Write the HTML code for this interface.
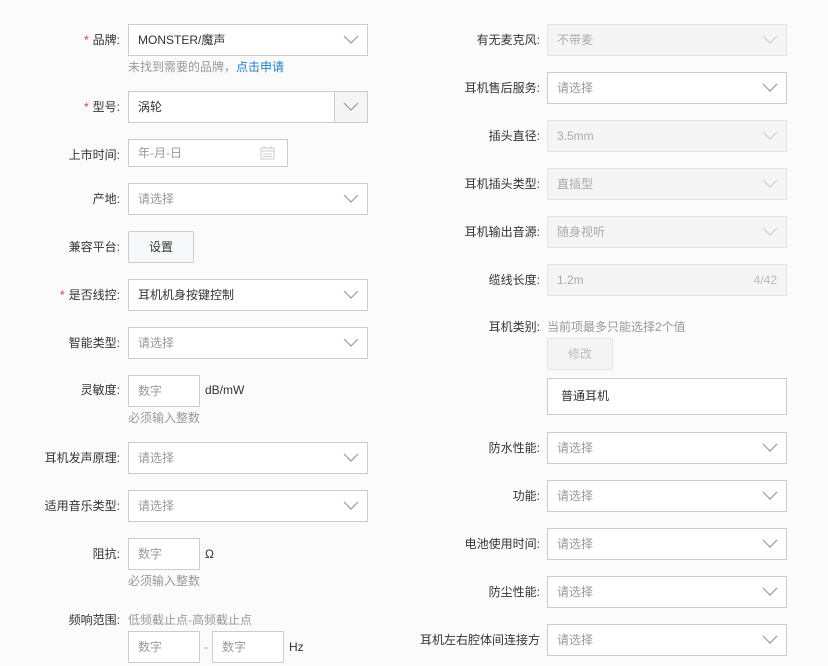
<!DOCTYPE html>
<html><head><meta charset="utf-8"><style>
*{box-sizing:border-box;margin:0;padding:0}
body{width:828px;height:666px;background:#fbfbfc;font-family:"Liberation Sans","Noto Sans CJK SC",sans-serif;font-size:12px;color:#333;position:relative;overflow:hidden}
.l{position:absolute;text-align:right;white-space:nowrap;color:#333;line-height:14px}
.r{color:#e4393c;margin-right:4px}
.b{position:absolute;border:1px solid #ccc;background:#fff;height:32px;line-height:30px;padding-left:9px;white-space:nowrap}
.ph{color:#999}
.dis{background:#f5f5f5;border-color:#e3e3e3;color:#aaa}
.ar{position:absolute;right:8px;top:8px;width:16px;height:12px}
.h{position:absolute;color:#999;white-space:nowrap;line-height:14px}
.btn{position:absolute;border:1px solid #ccc;background:#f7f8fa;border-radius:2px;text-align:center;line-height:30px}
</style></head><body>
<svg width="0" height="0" style="position:absolute"><defs><symbol id="a" viewBox="0 0 16 12"><path d="M1 3 L8 10 L15 3" fill="none" stroke="#999" stroke-width="1.2"/></symbol><symbol id="ad" viewBox="0 0 16 12"><path d="M1 3 L8 10 L15 3" fill="none" stroke="#ccc" stroke-width="1.2"/></symbol></defs></svg>

<!-- left column -->
<div class="l" style="right:708px;top:33px"><span class="r">*</span>品牌:</div>
<div class="b" style="left:128px;top:24px;width:240px">MONSTER/魔声<svg class="ar"><use href="#a"/></svg></div>
<div class="h" style="left:128px;top:60px">未找到需要的品牌，<span style="color:#1e7fcf">点击申请</span></div>

<div class="l" style="right:708px;top:100px"><span class="r">*</span>型号:</div>
<div class="b" style="left:128px;top:91px;width:240px">涡轮<div style="position:absolute;right:0;top:0;width:33px;height:30px;background:#f5f5f5;border-left:1px solid #ccc"><svg class="ar" style="right:8px"><use href="#a"/></svg></div></div>

<div class="l" style="right:708px;top:148px">上市时间:</div>
<div class="b ph" style="left:128px;top:139px;width:160px;height:28px;line-height:26px">年-月-日<svg style="position:absolute;right:12px;top:6px" width="15" height="14" viewBox="0 0 15 14"><rect x="1" y="2" width="13" height="11" fill="none" stroke="#ccc"/><path d="M1 5h13M4 0v3M11 0v3M3 8h9M3 10.5h9" stroke="#ccc"/></svg></div>

<div class="l" style="right:708px;top:192px">产地:</div>
<div class="b ph" style="left:128px;top:183px;width:240px">请选择<svg class="ar"><use href="#a"/></svg></div>

<div class="l" style="right:708px;top:240px">兼容平台:</div>
<div class="btn" style="left:128px;top:231px;width:66px;height:32px">设置</div>

<div class="l" style="right:708px;top:288px"><span class="r">*</span>是否线控:</div>
<div class="b" style="left:128px;top:279px;width:240px">耳机机身按键控制<svg class="ar"><use href="#a"/></svg></div>

<div class="l" style="right:708px;top:336px">智能类型:</div>
<div class="b ph" style="left:128px;top:327px;width:240px">请选择<svg class="ar"><use href="#a"/></svg></div>

<div class="l" style="right:708px;top:383px">灵敏度:</div>
<div class="b ph" style="left:128px;top:375px;width:72px">数字</div>
<div class="h" style="left:205px;top:383px;color:#333">dB/mW</div>
<div class="h" style="left:128px;top:411px">必须输入整数</div>

<div class="l" style="right:708px;top:451px">耳机发声原理:</div>
<div class="b ph" style="left:128px;top:442px;width:240px">请选择<svg class="ar"><use href="#a"/></svg></div>

<div class="l" style="right:708px;top:499px">适用音乐类型:</div>
<div class="b ph" style="left:128px;top:490px;width:240px">请选择<svg class="ar"><use href="#a"/></svg></div>

<div class="l" style="right:708px;top:547px">阻抗:</div>
<div class="b ph" style="left:128px;top:538px;width:72px">数字</div>
<div class="h" style="left:205px;top:547px;color:#333">Ω</div>
<div class="h" style="left:128px;top:574px">必须输入整数</div>

<div class="l" style="right:708px;top:613px">频响范围:</div>
<div class="h" style="left:128px;top:613px">低频截止点-高频截止点</div>
<div class="b ph" style="left:128px;top:631px;width:72px">数字</div>
<div class="h" style="left:204px;top:640px">-</div>
<div class="b ph" style="left:212px;top:631px;width:72px">数字</div>
<div class="h" style="left:289px;top:640px;color:#333">Hz</div>

<!-- right column -->
<div class="l" style="right:288px;top:33px">有无麦克风:</div>
<div class="b dis" style="left:547px;top:24px;width:240px">不带麦<svg class="ar"><use href="#ad"/></svg></div>

<div class="l" style="right:288px;top:81px">耳机售后服务:</div>
<div class="b ph" style="left:547px;top:72px;width:240px">请选择<svg class="ar"><use href="#a"/></svg></div>

<div class="l" style="right:288px;top:129px">插头直径:</div>
<div class="b dis" style="left:547px;top:120px;width:240px">3.5mm<svg class="ar"><use href="#ad"/></svg></div>

<div class="l" style="right:288px;top:177px">耳机插头类型:</div>
<div class="b dis" style="left:547px;top:168px;width:240px">直插型<svg class="ar"><use href="#ad"/></svg></div>

<div class="l" style="right:288px;top:225px">耳机输出音源:</div>
<div class="b dis" style="left:547px;top:216px;width:240px">随身视听<svg class="ar"><use href="#ad"/></svg></div>

<div class="l" style="right:288px;top:273px">缆线长度:</div>
<div class="b dis" style="left:547px;top:264px;width:240px">1.2m<span style="position:absolute;right:9px;color:#bbb">4/42</span></div>

<div class="l" style="right:288px;top:320px">耳机类别:</div>
<div class="h" style="left:547px;top:320px">当前项最多只能选择2个值</div>
<div class="btn" style="left:547px;top:338px;width:66px;height:32px;color:#bbb;border-color:#e3e3e3;background:#f5f5f5">修改</div>
<div class="b" style="left:547px;top:378px;width:240px;height:37px;line-height:35px;padding-left:13px">普通耳机</div>

<div class="l" style="right:288px;top:441px">防水性能:</div>
<div class="b ph" style="left:547px;top:432px;width:240px">请选择<svg class="ar"><use href="#a"/></svg></div>

<div class="l" style="right:288px;top:489px">功能:</div>
<div class="b ph" style="left:547px;top:480px;width:240px">请选择<svg class="ar"><use href="#a"/></svg></div>

<div class="l" style="right:288px;top:537px">电池使用时间:</div>
<div class="b ph" style="left:547px;top:528px;width:240px">请选择<svg class="ar"><use href="#a"/></svg></div>

<div class="l" style="right:288px;top:585px">防尘性能:</div>
<div class="b ph" style="left:547px;top:576px;width:240px">请选择<svg class="ar"><use href="#a"/></svg></div>

<div class="l" style="right:288px;top:633px">耳机左右腔体间连接方</div>
<div class="b ph" style="left:547px;top:624px;width:240px">请选择<svg class="ar"><use href="#a"/></svg></div>
</body></html>
